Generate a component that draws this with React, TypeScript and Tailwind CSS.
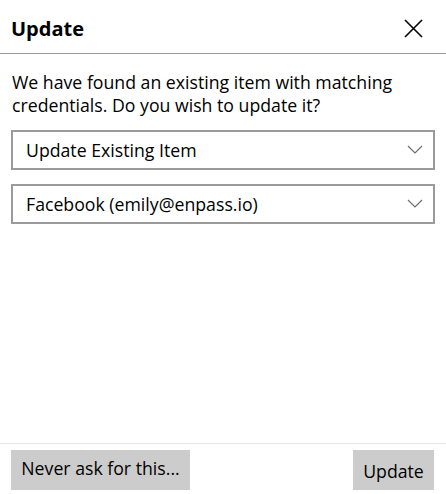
import React from "react";

const Chevron = () => (
  <svg width="16" height="9" viewBox="0 0 16 9" fill="none">
    <polyline points="1,1 8,8 15,1" stroke="#6b6b6b" strokeWidth="1.1" />
  </svg>
);

const Select = ({ value }: { value: string }) => (
  <div className="h-[40px] border-2 border-[#9a9a9a] flex items-center justify-between pl-[13px] pr-[10px] text-[17.7px] text-black">
    <span>{value}</span>
    <Chevron />
  </div>
);

export default function App() {
  return (
    <div className="w-[446px] h-[494px] bg-white flex flex-col font-['Open_Sans',sans-serif] text-black">
      <div className="h-[54px] shrink-0 flex items-center justify-between pl-[11px] pr-[23px] pt-[4px] border-b border-[#9a9a9a]">
        <span className="text-[20px] font-bold">Update</span>
        <svg width="19" height="19" viewBox="0 0 19 19">
          <path d="M1 1 L18 18 M18 1 L1 18" stroke="#000" strokeWidth="1.6" />
        </svg>
      </div>
      <div className="flex flex-col px-[11px] pt-[17px]">
        <p className="text-[17.7px] leading-[23.4px] pl-[1px]">
          We have found an existing item with matching credentials. Do you wish to update it?
        </p>
        <div className="flex flex-col gap-[14px] mt-[12px]">
          <Select value="Update Existing Item" />
          <Select value="Facebook (emily@enpass.io)" />
        </div>
      </div>
      <div className="flex-1" />
      <div className="h-[51px] shrink-0 border-t border-[#e6e6e6] flex justify-between items-start pt-[6px] pl-[11px] pr-[12px]">
        <button className="h-[40px] w-[179px] bg-[#cccccc] text-[17.7px] flex items-center justify-center pb-[3px]">
          Never ask for this...
        </button>
        <button className="h-[40px] w-[81px] bg-[#cccccc] text-[17.7px] flex items-center justify-center pt-[3px]">
          Update
        </button>
      </div>
    </div>
  );
}
